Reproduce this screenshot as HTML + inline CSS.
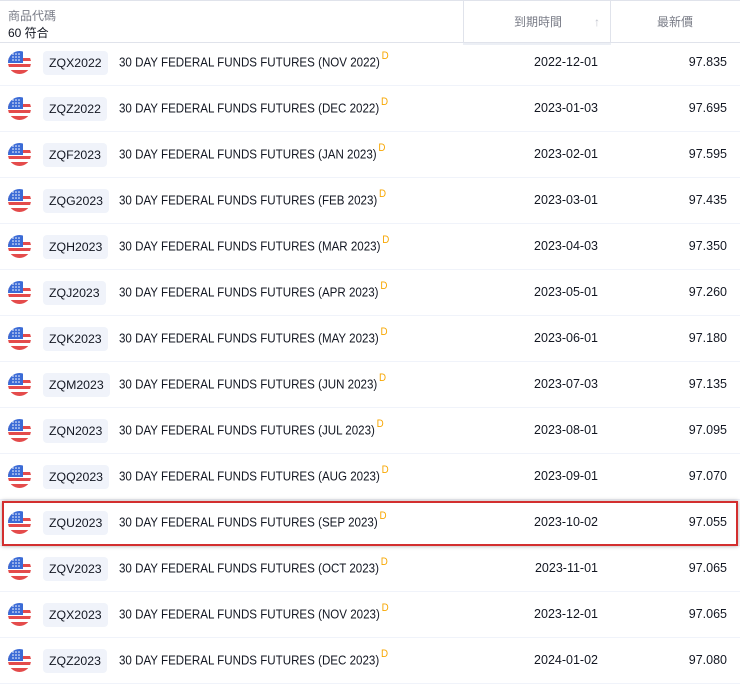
<!DOCTYPE html>
<html><head><meta charset="utf-8"><style>
body{margin:0;width:740px;height:685px;background:#fff;font-family:"Liberation Sans","Noto Sans CJK TC",sans-serif;color:#131722;position:relative;overflow:hidden}
.hdr{position:absolute;top:0;left:0;width:740px;height:43px;border-top:1px solid #e0e3eb;border-bottom:1px solid #e0e3eb;box-sizing:border-box}
.h1{position:absolute;left:8px;top:6px;font-size:12px;color:#787b86}
.h2{position:absolute;left:8px;top:23px;font-size:12px;color:#131722}
.hc{position:absolute;top:0;height:42px;border-left:1px solid #e0e3eb;font-size:12px;color:#787b86;line-height:42px;box-sizing:border-box}
.row{position:absolute;left:0;width:740px;height:46px;border-bottom:1px solid #f0f3fa;box-sizing:border-box;font-size:12.5px}
.flag{position:absolute;left:8px;top:11px;width:23px;height:23px}
.tk{position:absolute;left:43px;top:11px;height:24px;line-height:24px;padding:0 6px;background:#f0f3fa;border-radius:4px;font-size:12.3px}
.ds{position:absolute;left:119px;top:12px;font-size:13px;white-space:nowrap;transform:scaleX(.89);transform-origin:0 0}
.ds sup{color:#f7a600;font-size:11px;position:relative;top:-2px;margin-left:2px}
.dt{position:absolute;right:142px;top:15px}
.pr{position:absolute;right:13px;top:15px}
.hl{position:absolute;left:2px;top:501px;width:736px;height:45px;border:2px solid #d32f2f;box-sizing:border-box;box-shadow:0 0 4px rgba(0,0,0,.35)}
</style></head><body>
<div class="hdr">
<div class="h1">商品代碼</div><div class="h2">60 符合</div>
<div class="hc" style="left:463px;width:148px;padding-left:50px;box-shadow:0 2px 0 #eceff5">到期時間<span style="position:absolute;left:130px;color:#c0c3cc">↑</span></div>
<div class="hc" style="left:610px;width:130px;padding-left:46px">最新價</div>
</div>
<svg width="0" height="0" style="position:absolute"><defs><clipPath id="c"><circle cx="11.5" cy="11.5" r="11.5"/></clipPath>
<g id="f" clip-path="url(#c)"><rect width="23" height="23" fill="#fff"/><rect y="13" width="23" height="3" fill="#e44b4b"/><rect y="19" width="23" height="4" fill="#e44b4b"/><rect y="7" width="23" height="3" fill="#e44b4b"/><rect width="15" height="12" fill="#3b6bd6"/><g fill="#fff"><circle cx="5" cy="3" r=".8"/><circle cx="8" cy="3" r=".8"/><circle cx="11" cy="3" r=".8"/><circle cx="5" cy="6" r=".8"/><circle cx="8" cy="6" r=".8"/><circle cx="11" cy="6" r=".8"/><circle cx="5" cy="9" r=".8"/><circle cx="8" cy="9" r=".8"/><circle cx="11" cy="9" r=".8"/></g></g></defs></svg>
<div class="row" style="top:40px"><svg class="flag"><use href="#f"/></svg><div class="tk">ZQX2022</div><div class="ds">30 DAY FEDERAL FUNDS FUTURES (NOV 2022)<sup>D</sup></div><div class="dt">2022-12-01</div><div class="pr">97.835</div></div>
<div class="row" style="top:86px"><svg class="flag"><use href="#f"/></svg><div class="tk">ZQZ2022</div><div class="ds">30 DAY FEDERAL FUNDS FUTURES (DEC 2022)<sup>D</sup></div><div class="dt">2023-01-03</div><div class="pr">97.695</div></div>
<div class="row" style="top:132px"><svg class="flag"><use href="#f"/></svg><div class="tk">ZQF2023</div><div class="ds">30 DAY FEDERAL FUNDS FUTURES (JAN 2023)<sup>D</sup></div><div class="dt">2023-02-01</div><div class="pr">97.595</div></div>
<div class="row" style="top:178px"><svg class="flag"><use href="#f"/></svg><div class="tk">ZQG2023</div><div class="ds">30 DAY FEDERAL FUNDS FUTURES (FEB 2023)<sup>D</sup></div><div class="dt">2023-03-01</div><div class="pr">97.435</div></div>
<div class="row" style="top:224px"><svg class="flag"><use href="#f"/></svg><div class="tk">ZQH2023</div><div class="ds">30 DAY FEDERAL FUNDS FUTURES (MAR 2023)<sup>D</sup></div><div class="dt">2023-04-03</div><div class="pr">97.350</div></div>
<div class="row" style="top:270px"><svg class="flag"><use href="#f"/></svg><div class="tk">ZQJ2023</div><div class="ds">30 DAY FEDERAL FUNDS FUTURES (APR 2023)<sup>D</sup></div><div class="dt">2023-05-01</div><div class="pr">97.260</div></div>
<div class="row" style="top:316px"><svg class="flag"><use href="#f"/></svg><div class="tk">ZQK2023</div><div class="ds">30 DAY FEDERAL FUNDS FUTURES (MAY 2023)<sup>D</sup></div><div class="dt">2023-06-01</div><div class="pr">97.180</div></div>
<div class="row" style="top:362px"><svg class="flag"><use href="#f"/></svg><div class="tk">ZQM2023</div><div class="ds">30 DAY FEDERAL FUNDS FUTURES (JUN 2023)<sup>D</sup></div><div class="dt">2023-07-03</div><div class="pr">97.135</div></div>
<div class="row" style="top:408px"><svg class="flag"><use href="#f"/></svg><div class="tk">ZQN2023</div><div class="ds">30 DAY FEDERAL FUNDS FUTURES (JUL 2023)<sup>D</sup></div><div class="dt">2023-08-01</div><div class="pr">97.095</div></div>
<div class="row" style="top:454px"><svg class="flag"><use href="#f"/></svg><div class="tk">ZQQ2023</div><div class="ds">30 DAY FEDERAL FUNDS FUTURES (AUG 2023)<sup>D</sup></div><div class="dt">2023-09-01</div><div class="pr">97.070</div></div>
<div class="row" style="top:500px"><svg class="flag"><use href="#f"/></svg><div class="tk">ZQU2023</div><div class="ds">30 DAY FEDERAL FUNDS FUTURES (SEP 2023)<sup>D</sup></div><div class="dt">2023-10-02</div><div class="pr">97.055</div></div>
<div class="row" style="top:546px"><svg class="flag"><use href="#f"/></svg><div class="tk">ZQV2023</div><div class="ds">30 DAY FEDERAL FUNDS FUTURES (OCT 2023)<sup>D</sup></div><div class="dt">2023-11-01</div><div class="pr">97.065</div></div>
<div class="row" style="top:592px"><svg class="flag"><use href="#f"/></svg><div class="tk">ZQX2023</div><div class="ds">30 DAY FEDERAL FUNDS FUTURES (NOV 2023)<sup>D</sup></div><div class="dt">2023-12-01</div><div class="pr">97.065</div></div>
<div class="row" style="top:638px"><svg class="flag"><use href="#f"/></svg><div class="tk">ZQZ2023</div><div class="ds">30 DAY FEDERAL FUNDS FUTURES (DEC 2023)<sup>D</sup></div><div class="dt">2024-01-02</div><div class="pr">97.080</div></div>
<div class="hl"></div>
</body></html>
